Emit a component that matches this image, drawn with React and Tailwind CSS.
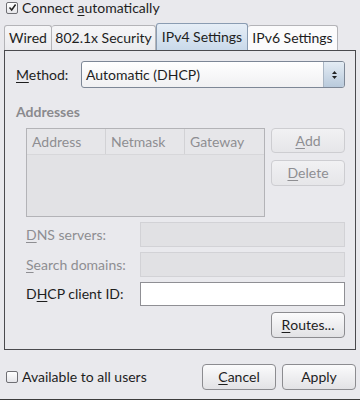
import React from "react";

const U = ({ children }) => <span className="underline underline-offset-2 decoration-1">{children}</span>;

function Check({ checked }) {
  return (
    <div className="w-[12px] h-[12px] border border-[#6f6f74] rounded-[2px] bg-gradient-to-b from-[#ffffff] to-[#e6e6ea] flex items-center justify-center shrink-0">
      {checked && (
        <svg width="9" height="9" viewBox="0 0 9 9">
          <path d="M1.5 4.5 L3.7 7 L7.6 1.5" stroke="#222" strokeWidth="1.5" fill="none" />
        </svg>
      )}
    </div>
  );
}

function Btn({ children, disabled, className = "" }) {
  return (
    <div
      className={
        "flex items-center justify-center rounded-[4px] border " +
        (disabled
          ? "border-[#cdcdd1] bg-gradient-to-b from-[#f1f1f3] to-[#e6e6e9] text-[#8e8e92] "
          : "border-[#8c8c90] bg-gradient-to-b from-[#fbfbfc] to-[#e2e2e5] text-[#1e1e1e] ") +
        className
      }
    >
      {children}
    </div>
  );
}

export default function App() {
  return (
    <div
      className="w-[360px] h-[400px] bg-[#e9e9ed] overflow-hidden text-[14px] leading-[18px] text-[#1e1e1e] flex flex-col border-b border-[#3c3c3c]"
      style={{ fontFamily: "Lato, 'Open Sans', sans-serif" }}
    >
      {/* top checkbox */}
      <div className="flex items-center h-[15px] pl-[6px] gap-[4px]">
        <Check checked />
        <span className="leading-[15px]">Connect <U>a</U>utomatically</span>
      </div>

      {/* tabs */}
      <div className="flex items-end h-[35px] pl-[4px]">
        <div className="h-[25px] w-[48px] border border-b-0 border-[#b4b4b8] rounded-t-[3px] bg-gradient-to-b from-[#f6f6f8] to-[#ebebee] flex items-center justify-center">Wired</div>
        <div className="h-[25px] w-[104px] border border-b-0 border-l-0 border-[#b4b4b8] rounded-t-[3px] bg-gradient-to-b from-[#f6f6f8] to-[#ebebee] flex items-center justify-center">802.1x Security</div>
        <div className="h-[27px] w-[92px] border border-b-0 border-[#8a9cb2] rounded-t-[3px] bg-gradient-to-b from-[#e6eef7] to-[#c9d9ea] flex items-center justify-center">IPv4 Settings</div>
        <div className="h-[25px] w-[90px] border border-b-0 border-l-0 border-[#b4b4b8] rounded-t-[3px] bg-[#fbfbfc] flex items-center justify-center">IPv6 Settings</div>
      </div>

      {/* panel */}
      <div className="mx-[4px] h-[300px] border border-[#4a4a4e] flex flex-col pl-[11px] pr-[10px]">
        <div className="flex items-center mt-[10px] h-[27px]">
          <div className="w-[65px]"><U>M</U>ethod:</div>
          <div className="flex-1 h-[27px] border border-[#7d8796] rounded-[3px] flex overflow-hidden bg-gradient-to-b from-[#ffffff] to-[#f0f0f2]">
            <div className="flex-1 flex items-center pl-[4px]">Automatic (DHCP)</div>
            <div className="w-[21px] border-l border-[#aab6c4] bg-gradient-to-b from-[#e4ecf4] to-[#b9cadc] flex flex-col items-center justify-center gap-[2px]">
              <svg width="5" height="3" viewBox="0 0 5 3"><path d="M0 3 L2.5 0 L5 3Z" fill="#222" /></svg>
              <svg width="5" height="3" viewBox="0 0 5 3"><path d="M0 0 L2.5 3 L5 0Z" fill="#222" /></svg>
            </div>
          </div>
        </div>

        <div className="mt-[15px] h-[18px] flex items-center font-bold text-[#8a8a8e]">Addresses</div>

        <div className="mt-[7px] flex pl-[10px] gap-[6px]">
          <div className="w-[239px] h-[89px] border border-[#b3b3b7] bg-[#e2e2e5] flex flex-col">
            <div className="flex h-[26px] text-[#8e8e92] border-b border-[#d7d7da] bg-[#e6e6e9]">
              <div className="w-[79px] border-r border-[#d2d2d5] flex items-center pl-[5px]">Address</div>
              <div className="w-[79px] border-r border-[#d2d2d5] flex items-center pl-[5px]">Netmask</div>
              <div className="flex-1 flex items-center pl-[5px]">Gateway</div>
            </div>
          </div>
          <div className="flex flex-col gap-[7px]">
            <Btn disabled className="w-[74px] h-[25px]"><U>A</U>dd</Btn>
            <Btn disabled className="w-[74px] h-[26px]"><U>D</U>elete</Btn>
          </div>
        </div>

        <div className="mt-[5px] flex items-center pl-[10px] h-[25px] text-[#8e8e92]">
          <div className="w-[114px]"><U>D</U>NS servers:</div>
          <div className="flex-1 h-[25px] border border-[#d2d2d6] bg-[#e1e1e4]" />
        </div>
        <div className="mt-[5px] flex items-center pl-[10px] h-[25px] text-[#8e8e92]">
          <div className="w-[114px]"><U>S</U>earch domains:</div>
          <div className="flex-1 h-[25px] border border-[#d2d2d6] bg-[#e1e1e4]" />
        </div>
        <div className="mt-[5px] flex items-center pl-[10px] h-[24px]">
          <div className="w-[114px]">D<U>H</U>CP client ID:</div>
          <div className="flex-1 h-[24px] border border-[#8f8f94] bg-white" />
        </div>
        <div className="mt-[6px] flex justify-end">
          <Btn className="w-[74px] h-[26px]"><U>R</U>outes...</Btn>
        </div>
      </div>

      {/* bottom */}
      <div className="flex items-center mt-[14px] h-[26px] pr-[4px]">
        <div className="flex items-center gap-[4px] pl-[6px] flex-1">
          <Check />
          <span>Available to all users</span>
        </div>
        <Btn className="w-[74px] h-[26px]"><U>C</U>ancel</Btn>
        <Btn className="w-[74px] h-[26px] ml-[6px]">Apply</Btn>
      </div>
    </div>
  );
}
